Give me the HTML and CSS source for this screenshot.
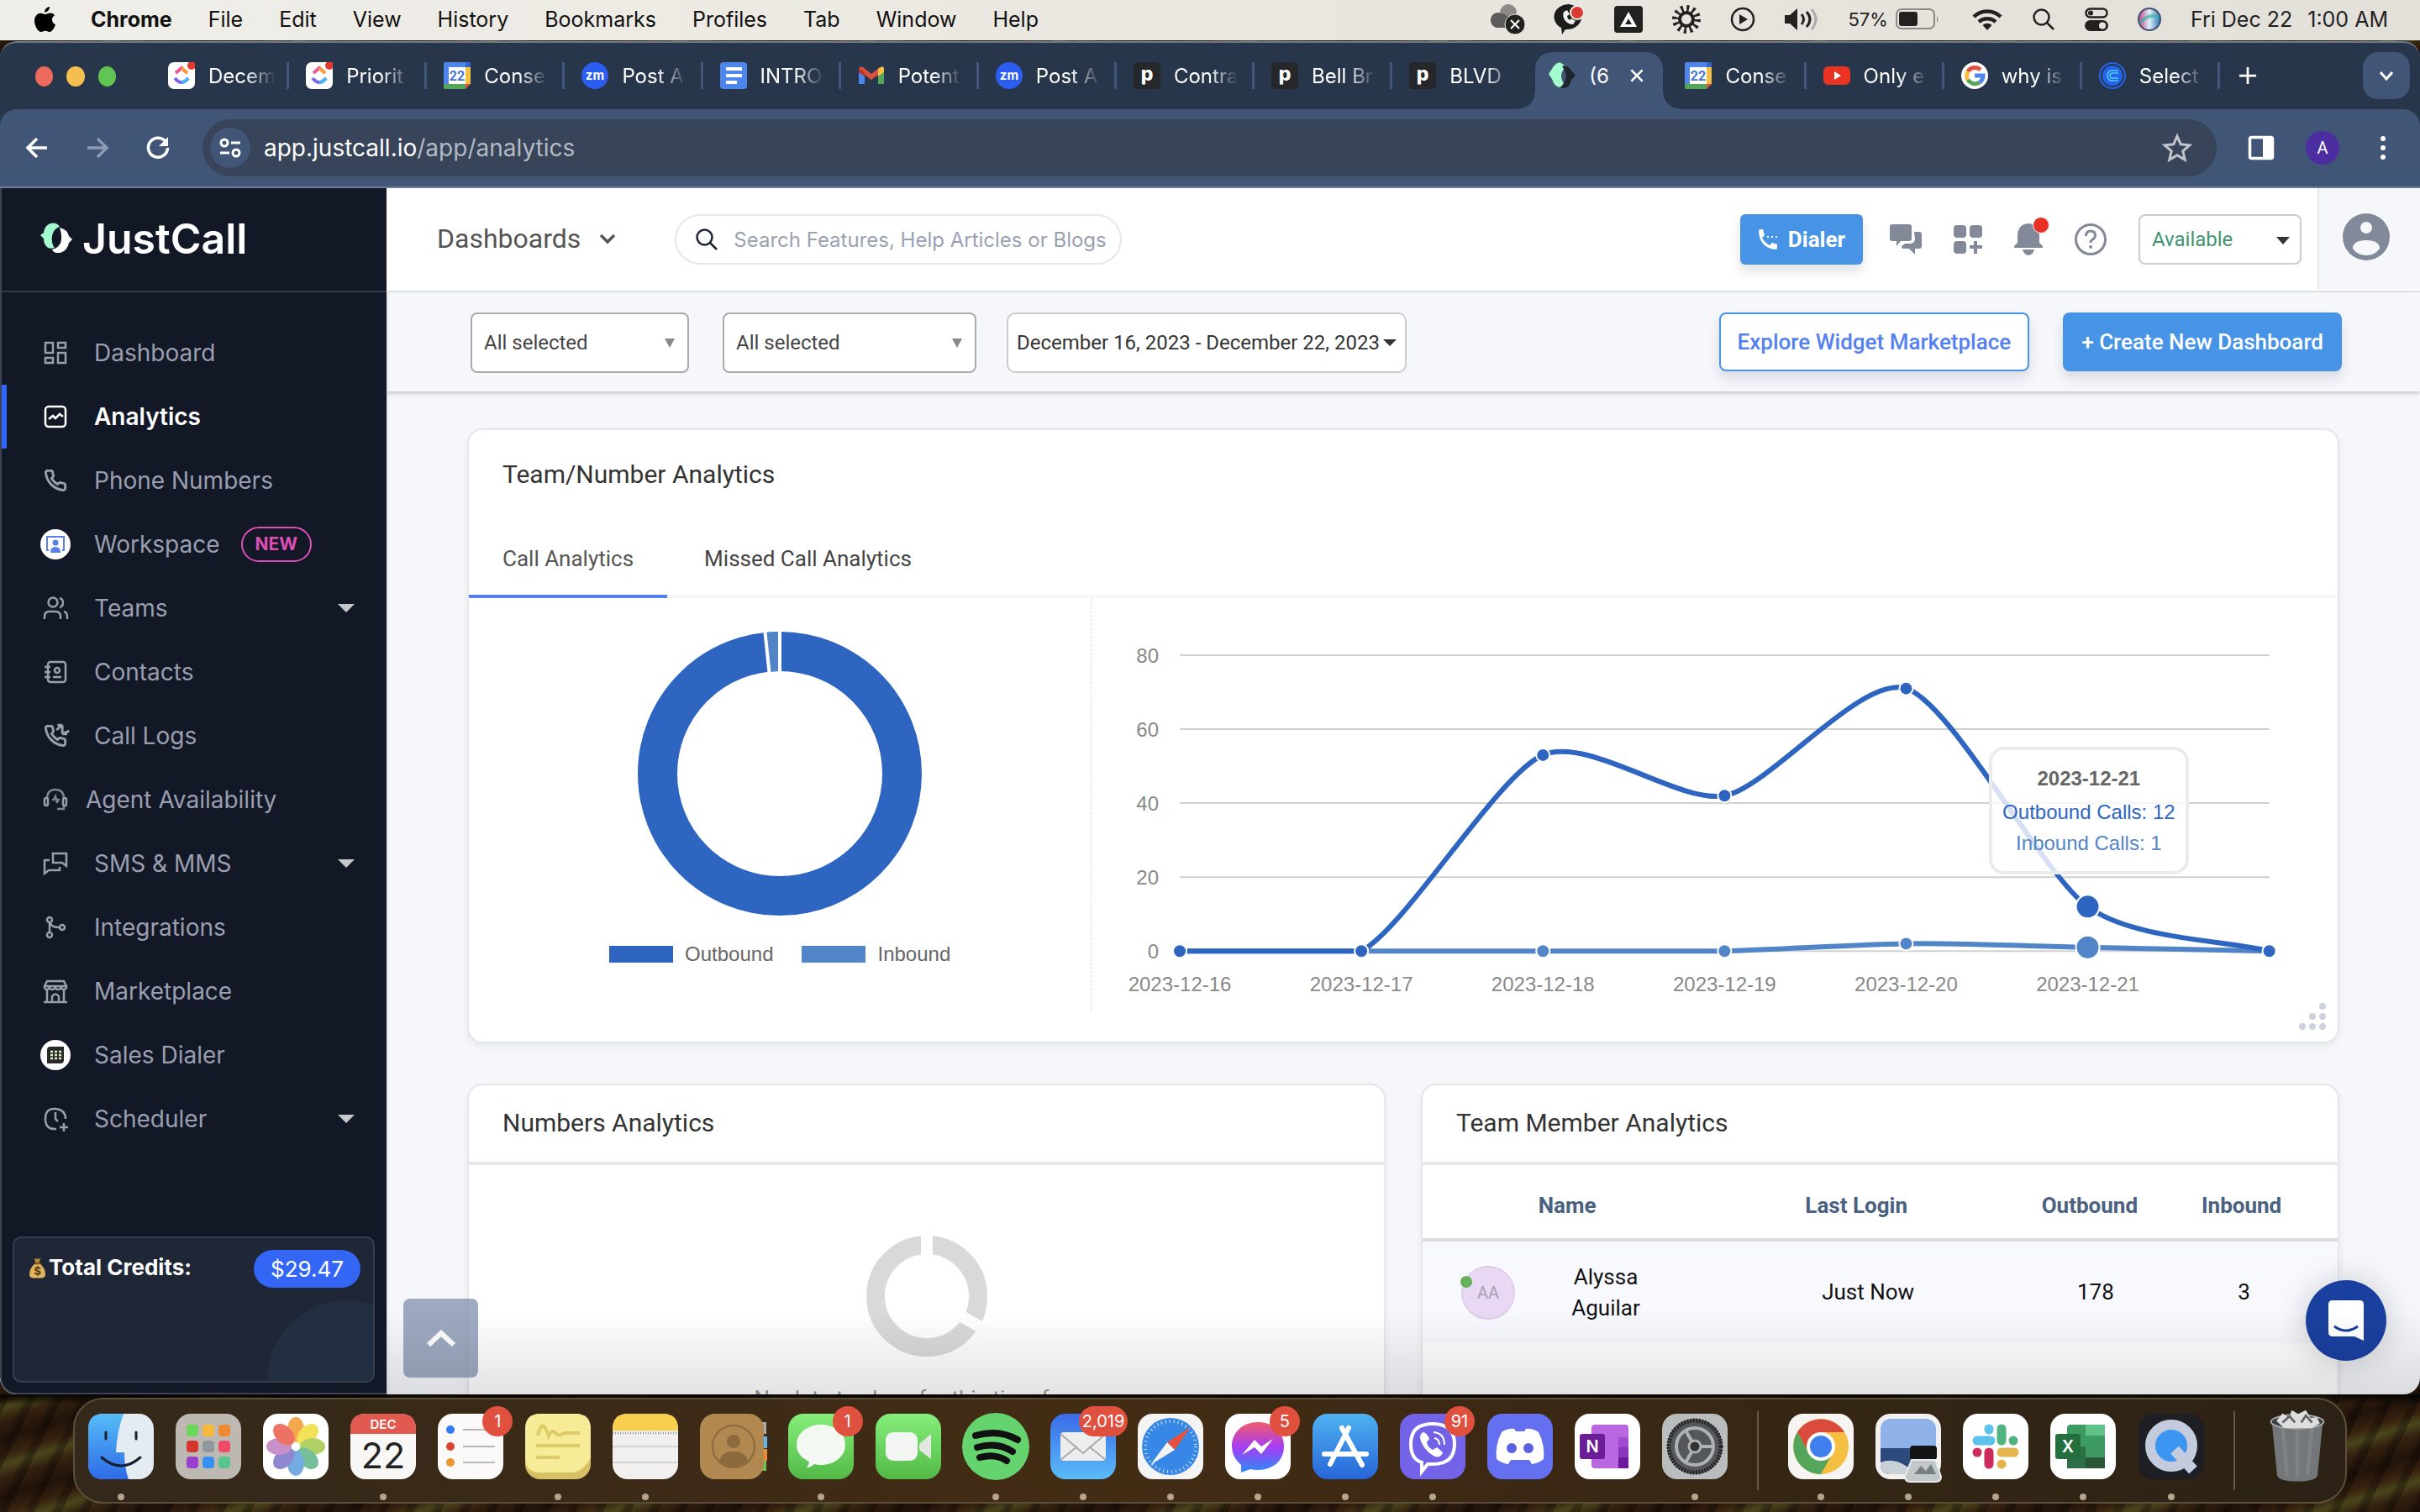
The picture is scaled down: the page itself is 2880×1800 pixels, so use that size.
FILE: index.html
```html
<!DOCTYPE html>
<html lang="en">
<head>
<meta charset="UTF-8">
<meta name="viewport" content="width=device-width, initial-scale=1.0">
<title>JustCall - Analytics</title>
<link rel="stylesheet" href="styles.css">
</head>
<body>
<!-- shared icons -->
<svg class="defs" aria-hidden="true">
<symbol id="i-clickup" viewBox="0 0 32 32"><rect width="32" height="32" rx="7" fill="#fff"/><path d="M9 13l7-6 7 6" fill="none" stroke="#f0569a" stroke-width="4"/><path d="M16 7l7 6" fill="none" stroke="#f9a03c" stroke-width="4"/><path d="M8 19q8 10 16 0" fill="none" stroke="#7b68ee" stroke-width="4"/><path d="M16 24q4 0 8-5" fill="none" stroke="#49b7f5" stroke-width="4"/><circle cx="28" cy="4" r="5" fill="#e23b2e"/></symbol>
<symbol id="i-gcal" viewBox="0 0 32 32"><path d="M0 2q0-2 2-2h24v26H0z" fill="#4f86ec"/><path d="M26 0h4q2 0 2 2v4h-6z" fill="#3467d6"/><path d="M26 6h6v20h-6z" fill="#f5c042"/><path d="M0 26h26v6H2q-2 0-2-2z" fill="#55a55a"/><path d="M26 26h6l-6 6z" fill="#e0503f"/><path d="M6 6h20v20H6z" fill="#fff"/><text x="16" y="22" text-anchor="middle" font-family="Roboto" font-size="16" font-weight="700" fill="#4575d0">22</text></symbol>
<symbol id="i-zoom" viewBox="0 0 32 32"><circle cx="16" cy="16" r="16" fill="#2b5df0"/><text x="16" y="21" text-anchor="middle" font-family="Inter" font-size="15" font-weight="700" fill="#fff">zm</text></symbol>
<symbol id="i-pd" viewBox="0 0 32 32"><rect width="32" height="32" rx="5" fill="#25272b"/><text x="16" y="22" text-anchor="middle" font-family="Inter" font-size="23" font-weight="800" fill="#fff">p</text></symbol>
<symbol id="i-phone" viewBox="0 0 24 24"><path d="M22 16.9v3a2 2 0 0 1-2.2 2A19.8 19.8 0 0 1 2.1 4.2 2 2 0 0 1 4.1 2h3a2 2 0 0 1 2 1.7c.1 1 .4 1.9.7 2.8a2 2 0 0 1-.5 2.1L8.1 9.900a16 16 0 0 0 6 6l1.300-1.200a2 2 0 0 1 2.100-.5c.9.3 1.800.6 2.800.7a2 2 0 0 1 1.700 2z"/></symbol>
<symbol id="i-x" viewBox="0 0 20 20"><path d="M4 4l12 12M16 4L4 16" stroke="currentColor" stroke-width="2.500" fill="none"/></symbol>
<symbol id="i-search" viewBox="0 0 28 28"><circle cx="11.500" cy="11.500" r="9" fill="none" stroke="currentColor" stroke-width="2.500"/><path d="M18 18l8 8" stroke="currentColor" stroke-width="2.500"/></symbol>
</svg>

<header class="menubar">
<nav class="menus">
<svg class="apple" viewBox="0 0 26 30"><path d="M18 0c.3 3-2.500 6.500-5.800 6.600C11.800 3.500 14.800.3 18 0zM24 10.300c-4.500 2.700-3.800 9 1 11C23.500 25.500 21 30 17.800 30c-2 0-2.600-1.200-4.900-1.200S9.800 30 8 30C4 30 0 22.500 0 17 0 11 3.700 7.700 7.500 7.700c2.200 0 3.900 1.400 5.400 1.400 1.400 0 3.400-1.500 6.100-1.500 2 0 3.900 1 5 2.700z"/></svg>
<a href="#" class="app">Chrome</a><a href="#">File</a><a href="#">Edit</a><a href="#">View</a><a href="#">History</a><a href="#">Bookmarks</a><a href="#">Profiles</a><a href="#">Tab</a><a href="#">Window</a><a href="#">Help</a>
</nav>
<div class="status">
<svg width="40" height="36" viewBox="0 0 40 36"><circle cx="20" cy="10" r="10" fill="#8b8a86"/><path d="M8 28a9 9 0 1 1 4-17c6 0 10 6 10 17z" fill="#5d5c5a"/><circle cx="28" cy="24" r="12" fill="#22211f" stroke="#e8e5df"/><path d="M23 19l10 10M33 19L23 29" stroke="#fff" stroke-width="2"/></svg>
<svg width="36" height="36" viewBox="0 0 36 36"><path d="M17 0a17 15 0 1 1-4 30l-4 6-1-8A17 15 0 0 1 17 0z" fill="#1b1b1a"/><path d="M11 9c-3 7 3 15 11 15l3-4-5-3-2 2q-3-2-3-5l3-2-3-5z" fill="#eee"/><circle cx="27" cy="10" r="8" fill="#d93a31" stroke="#eee" stroke-width="2"/></svg>
<svg width="34" height="34" viewBox="0 0 34 34"><rect y="1" width="34" height="32" rx="4" fill="#22211f"/><path d="M17 8l10 18H7z" fill="#fff"/><path d="M17 16l4 7h-8z" fill="#22211f"/></svg>
<svg width="34" height="34" viewBox="0 0 34 34"><circle cx="17" cy="17" r="8" fill="none" stroke="#22211f" stroke-width="4"/><circle cx="17" cy="17" r="13" fill="none" stroke="#22211f" stroke-width="8" stroke-dasharray="2.800 4"/></svg>
<svg width="30" height="30" viewBox="0 0 30 30"><circle cx="15" cy="15" r="13" fill="none" stroke="#22211f" stroke-width="2.500"/><path d="M11 9l10 6-10 6z" fill="#22211f"/></svg>
<svg width="40" height="28" viewBox="0 0 40 28"><path d="M0 9h6l9-8v26l-9-8H0z" fill="#22211f"/><path d="M20 8q5 6 0 12M26 5q8 9 0 18" fill="none" stroke="#22211f" stroke-width="3"/><path d="M32 2q10 12 0 24" fill="none" stroke="#aaa" stroke-width="3"/></svg>
<span class="batt">57% <svg width="52" height="26" viewBox="0 0 52 26"><rect x="1" y="1" width="45" height="23" rx="6" fill="none" stroke="#8b8a86" stroke-width="2"/><rect x="4" y="4" width="22" height="17" rx="3" fill="#22211f"/><path d="M49 9q3 4 0 8z" fill="#8b8a86"/></svg></span>
<svg width="36" height="26" viewBox="0 0 36 26"><path d="M2 10a23 23 0 0 1 32 0M8 16a15 15 0 0 1 20 0" fill="none" stroke="#22211f" stroke-width="4.500"/><path d="M12.500 20a8 8 0 0 1 11 0L18 26z" fill="#22211f"/></svg>
<svg width="28" height="28"><use href="#i-search"/></svg>
<svg width="28" height="28" viewBox="0 0 28 28"><rect x="1.500" y="1.500" width="25" height="10" rx="5" fill="none" stroke="#22211f" stroke-width="2.500"/><circle cx="7" cy="6.500" r="3" fill="#22211f"/><rect y="15" width="28" height="13" rx="6.500" fill="#22211f"/><circle cx="21" cy="21.500" r="4" fill="#e8e5df"/></svg>
<svg width="28" height="28" viewBox="0 0 28 28"><defs><linearGradient id="siri"><stop offset="0" stop-color="#c84a8c"/><stop offset=".5" stop-color="#dff1f5"/><stop offset="1" stop-color="#3a7bc0"/></linearGradient></defs><circle cx="14" cy="14" r="14" fill="#414f71"/><circle cx="14" cy="14" r="12" fill="url(#siri)"/><path d="M3 18q11-12 22-6" stroke="#35b6a8" stroke-width="4" fill="none" opacity=".7"/></svg>
<span class="clock"><span>Fri Dec 22</span><span>1:00 AM</span></span>
</div>
</header>

<div class="window">
<div class="tabstrip">
<div class="lights"><i class="red"></i><i class="yellow"></i><i class="green"></i></div>
<div class="tabs">
<div class="tab"><svg><use href="#i-clickup"/></svg><span>Decem</span></div>
<div class="tab"><svg><use href="#i-clickup"/></svg><span>Priorit</span></div>
<div class="tab"><svg><use href="#i-gcal"/></svg><span>Conse</span></div>
<div class="tab"><svg><use href="#i-zoom"/></svg><span>Post A</span></div>
<div class="tab"><svg viewBox="0 0 32 32"><rect width="32" height="32" rx="4" fill="#4f86ec"/><path d="M7 8h19M7 16h19M7 24h13" stroke="#fff" stroke-width="4"/></svg><span>INTRO</span></div>
<div class="tab"><svg viewBox="0 0 32 32"><path d="M1 7v19h7V12z" fill="#4f86ec"/><path d="M31 7v19h-7V12z" fill="#55a55a"/><path d="M1 9q0-5 5-3l10 8 10-8-2 9-8 6-8-6z" fill="#d9503f"/><path d="M24 8q7-6 7 1v3l-7 5z" fill="#f5c042"/><path d="M1 7l7 5v5l-7-5z" fill="#b8362c"/></svg><span>Potent</span></div>
<div class="tab"><svg><use href="#i-zoom"/></svg><span>Post A</span></div>
<div class="tab"><svg><use href="#i-pd"/></svg><span>Contra</span></div>
<div class="tab"><svg><use href="#i-pd"/></svg><span>Bell Br</span></div>
<div class="tab last"><svg><use href="#i-pd"/></svg><span>BLVD</span></div>
<div class="tab active"><svg viewBox="0 0 32 32"><path d="M4 8q8-14 16-2-10 10 0 22Q8 34 4 20l-4-6z" fill="#a4fbd0"/><path d="M16 5q6-2 11 5l5 6-5 5q-3 13-13 9Q26 18 16 5z" fill="#20242c"/></svg><span>(6</span><button class="close" aria-label="Close tab"><svg><use href="#i-x"/></svg></button></div>
<div class="tab"><svg><use href="#i-gcal"/></svg><span>Conse</span></div>
<div class="tab"><svg viewBox="0 0 32 32"><rect y="5" width="32" height="22" rx="6" fill="#ea3323"/><path d="M13 11l8 5-8 5z" fill="#fff"/></svg><span>Only e</span></div>
<div class="tab"><svg viewBox="0 0 32 32"><circle cx="16" cy="16" r="16" fill="#fff"/><g fill="none" stroke-width="5"><path d="M23 9a10 10 0 0 0-15 2" stroke="#e0503f"/><path d="M8 11a10 10 0 0 0 0 10" stroke="#f5c042"/><path d="M8 21a10 10 0 0 0 14 3" stroke="#55a55a"/><path d="M22 24a10 10 0 0 0 4-8H16" stroke="#4f86ec"/></g></svg><span>why is</span></div>
<div class="tab"><svg viewBox="0 0 32 32"><circle cx="16" cy="16" r="15" fill="none" stroke="#2563eb" stroke-width="2"/><circle cx="16" cy="16" r="12" fill="#2563eb"/><path d="M23 10H15a5 6 0 0 0 0 12h8M23 13h-7a3 3 0 0 0 0 6h7" fill="none" stroke="#4fd0f5" stroke-width="1.500"/></svg><span>Select</span></div>
</div>
<button class="newtab" aria-label="New tab"><svg viewBox="0 0 24 24"><path d="M12 1v22M1 12h22" stroke="#fff" stroke-width="3"/></svg></button>
<button class="tabmenu" aria-label="Search tabs"><svg viewBox="0 0 20 20"><path d="M3 6l7 8 7-8" fill="none" stroke="#fff" stroke-width="3"/></svg></button>
</div>

<div class="toolbar">
<button aria-label="Back"><svg viewBox="0 0 28 28"><path d="M26 14H4M14 3L3 14l11 11" fill="none" stroke="#fff" stroke-width="3.500"/></svg></button>
<button aria-label="Forward"><svg viewBox="0 0 28 28"><path d="M2 14h22M14 3l11 11-11 11" fill="none" stroke="#8d9ab2" stroke-width="3.500"/></svg></button>
<button aria-label="Reload"><svg viewBox="0 0 28 28"><path d="M24 8a11.500 11.500 0 1 0 1.500 6" fill="none" stroke="#fff" stroke-width="3.500"/><path d="M26 1v11H15z" fill="#fff"/></svg></button>
<div class="omnibox">
<span class="site"><svg viewBox="0 0 28 28" fill="none" stroke="#fff" stroke-width="3"><circle cx="7" cy="8" r="4"/><path d="M15 8h11M2 20h11"/><circle cx="21" cy="20" r="4"/></svg></span>
<p>app.justcall.io<em>/app/analytics</em></p>
<svg class="star" viewBox="0 0 34 34"><path d="M17 3l4.200 9.800 10.600 1-8 7 2.400 10.400L17 25.700l-9.200 5.500 2.400-10.400-8-7 10.600-1z" fill="none" stroke="#c2c6cc" stroke-width="3"/></svg>
</div>
<svg class="panel" viewBox="0 0 30 30"><rect x="1.500" y="2.500" width="27" height="25" rx="2" fill="none" stroke="#fff" stroke-width="3.500"/><path d="M17 2h11v26H17z" fill="#fff"/></svg>
<span class="profile">A</span>
<svg class="kebab" viewBox="0 0 8 30" fill="#fff"><circle cx="4" cy="4" r="3"/><circle cx="4" cy="15" r="3"/><circle cx="4" cy="26" r="3"/></svg>
</div>

<div class="page">
<aside class="sidebar">
<div class="logo"><svg viewBox="0 0 38 38"><path d="M4 12C6-2 20-2 23 5 12 8 12 24 17 30 8 33 4 26 4 19l-4-4z" fill="#a4fbd0"/><path d="M23 6q9 2 11 10l4 4-4 4q-3 13-15 12-4-1-5-4 16-4 9-26z" fill="#fff"/></svg><span>JustCall</span></div>
<nav class="menu">
<a href="#"><svg viewBox="0 0 28 28"><path d="M2 2h9v12H2zM17 2h9v6h-9zM2 20h9v6H2zM17 14h9v12h-9z"/></svg><span>Dashboard</span></a>
<a href="#" class="on"><svg viewBox="0 0 28 28"><rect x="2" y="2" width="24" height="24" rx="4"/><path d="M6 17l5-4 3 3 5-5 4 3"/></svg><span>Analytics</span></a>
<a href="#"><svg viewBox="0 0 24 24" stroke-width="2"><use href="#i-phone"/></svg><span>Phone Numbers</span></a>
<a href="#"><svg class="disc" viewBox="0 0 36 36"><circle cx="18" cy="18" r="18" fill="#fff" stroke="none"/><path d="M10 25H8V9h20v16h-2" stroke="#5b7fe8" stroke-width="2"/><circle cx="18" cy="16" r="3.500" fill="#5b7fe8" stroke="none"/><path d="M12 28q0-7 6-7t6 7z" fill="#5b7fe8" stroke="none"/></svg><span>Workspace</span><b class="new">NEW</b></a>
<a href="#"><svg viewBox="0 0 28 28"><circle cx="11" cy="7" r="5.500"/><path d="M1 27v-3q0-6 6-6h7q6 0 6 6v3M19 2q4 1 4 5.500T19 13M24 18q4 1 4 6v3"/></svg><span>Teams</span><i class="caret"></i></a>
<a href="#"><svg viewBox="0 0 28 28"><rect x="5" y="2" width="21" height="24" rx="3"/><path d="M1 8h7M1 14h7M1 20h7M11 20h10"/><circle cx="16" cy="12" r="3"/></svg><span>Contacts</span></a>
<a href="#"><svg viewBox="0 0 24 24"><use href="#i-phone"/><path d="M13 6l6-5m0 0h-5m5 0v4M26 7l-7 3m0 0V5m0 5h5"/></svg><span>Call Logs</span></a>
<a href="#" class="tight"><svg viewBox="0 0 28 28"><path d="M4 13Q4 2 14 2t10 11M10 14h2l2-4 2 8 1-4h2M24 20v5h-8" opacity=".8"/><rect x="1" y="12" width="4" height="9" rx="2"/><rect x="23" y="12" width="4" height="9" rx="2"/></svg><span>Agent Availability</span></a>
<a href="#"><svg viewBox="0 0 28 28"><path d="M11 2h16v15l-5-4H11zM7 10H1v16l5-4h13v-4"/></svg><span>SMS &amp; MMS</span><i class="caret"></i></a>
<a href="#"><svg viewBox="0 0 28 28"><circle cx="7" cy="5" r="3"/><circle cx="7" cy="23" r="3"/><circle cx="22" cy="14" r="3"/><path d="M7 8v12M8 9q1 5 11 5"/></svg><span>Integrations</span></a>
<a href="#"><svg viewBox="0 0 28 28"><path d="M4 2h20l3 6v2q-3 4-6 0-4 4-7 0-4 4-7 0-4 4-6 0V8zM4 13v13M24 13v13M0 27h28M2 8h24M10 26v-6q4-5 8 0v6"/></svg><span>Marketplace</span></a>
<a href="#"><svg class="disc" viewBox="0 0 36 36"><circle cx="18" cy="18" r="18" fill="#fff" stroke="none"/><path d="M8 12q0-4 4-4h16v16q0 4-4 4H8z" fill="#2a2a2a" stroke="none"/><path d="M12 14h13M12 18h13M12 22h13" stroke="#d9f5c4" stroke-width="2.500" stroke-dasharray="3 2"/></svg><span>Sales Dialer</span></a>
<a href="#"><svg viewBox="0 0 28 28"><path d="M15 26Q2 27 2 14T14 2t12 12M14 6v8l3 3M24 19v10M19 24h10"/></svg><span>Scheduler</span><i class="caret"></i></a>
</nav>
<div class="credits">
<svg viewBox="0 0 20 24"><path d="M6 0h8l-2 5H8z" fill="#b98a3a"/><path d="M7 6h6q7 6 7 13 0 5-5 5H5q-5 0-5-5Q0 12 7 6z" fill="#e0b45c"/><path d="M6 6h8" stroke="#8a5a20" stroke-width="2"/><text x="10" y="20" text-anchor="middle" font-size="14" font-weight="700" font-family="Inter" fill="#5a3c12">$</text></svg>
<strong>Total Credits:</strong><span>$29.47</span>
</div>
</aside>

<main>
<header class="topbar">
<button class="dash">Dashboards <svg viewBox="0 0 20 20"><path d="M2 6l8 8 8-8" fill="none" stroke="#555" stroke-width="3.500"/></svg></button>
<label class="search"><svg viewBox="0 0 28 28"><use href="#i-search"/></svg><input type="text" placeholder="Search Features, Help Articles or Blogs" aria-label="Search"></label>
<div class="actions">
<button class="dialer"><svg viewBox="0 0 24 24"><path d="M1 2q0-2 2-2h3l2 7-3 3q3 6 9 9l3-3 6 2v4q0 2-2 2Q2 22 1 2z" fill="#fff"/><path d="M11 9h2m3 0h2m3 0h2" stroke="#fff" stroke-width="2"/></svg>Dialer</button>
<svg width="38" height="36" viewBox="0 0 38 36"><path d="M3 0h20q3 0 3 3v14q0 3-3 3H13l-5 6v-6H3q-3 0-3-3V3q0-3 3-3z"/><path d="M29 9h6q3 0 3 3v14q0 3-3 3h-5v7l-7-7h-8l-1-3 4-3h7q5-1 5-6z"/></svg>
<svg width="34" height="34" viewBox="0 0 34 34"><rect width="15" height="15" rx="4"/><rect x="19" width="15" height="15" rx="4"/><rect y="19" width="15" height="15" rx="4"/><path d="M24 19h4v5h6v4h-6v6h-4v-6h-5v-4h5z"/></svg>
<span class="bell"><svg width="34" height="38" viewBox="0 0 34 38"><path d="M17 0q13 1 13 15v8l4 4v2H0v-2l4-4v-8Q4 1 17 0zM10 31h14q-2 7-7 7t-7-7z"/></svg></span>
<svg width="38" height="38" viewBox="0 0 38 38"><circle cx="19" cy="19" r="17.500" fill="none" stroke="#828a99" stroke-width="3"/><path d="M13.500 15q0-6 5.500-6t5.500 5q0 3-3 5t-2.500 4" fill="none" stroke="#828a99" stroke-width="3"/><circle cx="19" cy="28" r="2"/></svg>
<span class="pick status-pick"><select aria-label="Status"><option>Available</option></select></span>
</div>
<div class="me"><svg viewBox="0 0 56 56"><circle cx="28" cy="28" r="28"/><circle cx="28" cy="17" r="7" fill="#f5f7fb"/><path d="M12 42q0-10 16-10t16 10q-6 8-16 8t-16-8z" fill="#f5f7fb"/></svg></div>
</header>

<section class="filters">
<span class="pick w-s"><select aria-label="Teams"><option>All selected</option></select></span>
<span class="pick w-m"><select aria-label="Numbers"><option>All selected</option></select></span>
<button class="date">December 16, 2023 - December 22, 2023<i></i></button>
<button class="btn outline">Explore Widget Marketplace</button>
<button class="btn">+ Create New Dashboard</button>
</section>

<div class="cards">
<section class="card wide">
<h2>Team/Number Analytics</h2>
<div class="cardtabs"><button class="on">Call Analytics</button><button>Missed Call Analytics</button></div>
<div class="charts">
<div class="pie">
<svg viewBox="0 0 340 340" id="donut"></svg>
<ul><li class="out">Outbound</li><li class="in">Inbound</li></ul>
</div>
<div class="line">
<svg viewBox="0 0 1482 492" id="line"></svg>
<div class="tip"><b>2023-12-21</b><span class="o">Outbound Calls: 12</span><span class="i">Inbound Calls: 1</span></div>
</div>
</div>
<svg class="grip" viewBox="0 0 32 32"><g fill="#cdd2de"><circle cx="28" cy="4" r="4"/><circle cx="16" cy="16" r="4"/><circle cx="28" cy="16" r="4"/><circle cx="4" cy="28" r="4"/><circle cx="16" cy="28" r="4"/><circle cx="28" cy="28" r="4"/></g></svg>
</section>

<section class="card">
<h2 class="ruled">Numbers Analytics</h2>
<div class="empty">
<svg viewBox="0 0 144 144"><circle cx="72" cy="72" r="61" fill="none" stroke="#d9d9d9" stroke-width="22"/><path d="M72 72V-6M72 72l76 44" stroke="#fff" stroke-width="14"/></svg>
<p>No data to show for this time frame</p>
</div>
</section>

<section class="card">
<h2 class="ruled">Team Member Analytics</h2>
<table>
<thead><tr><th class="c1">Name</th><th class="c2">Last Login</th><th class="c3">Outbound</th><th class="c4">Inbound</th><th></th></tr></thead>
<tbody><tr><td><div class="member"><span class="avatar">AA</span><span>Alyssa<br>Aguilar</span></div></td><td>Just Now</td><td class="num">178</td><td class="num in">3</td><td></td></tr></tbody>
</table>
</section>
</div>
<button class="totop" aria-label="Back to top"><svg viewBox="0 0 36 24"><path d="M3 20L18 6l15 14" fill="none" stroke="#fff" stroke-width="6"/></svg></button>
<button class="chat" aria-label="Open chat"><svg viewBox="0 0 42 48"><path d="M5 0h32q5 0 5 5v43l-11-5H5q-5 0-5-5V5q0-5 5-5z" fill="#fff"/><path d="M7 31q14 10 28 0" fill="none" stroke="#1a409f" stroke-width="3"/></svg></button>
</main>
</div>
</div>

<footer class="dockarea">
<div class="dock">
<div class="ico run"><svg viewBox="0 0 78 78"><defs><linearGradient id="fin" x2="0" y2="1"><stop offset="0" stop-color="#55bdf7"/><stop offset="1" stop-color="#2f6ae8"/></linearGradient></defs><rect width="78" height="78" rx="18" fill="#e4ebf3"/><path d="M18 0h24q-8 22-9 46h10q0 18 5 32H18Q0 78 0 60V18Q0 0 18 0z" fill="url(#fin)"/><path d="M21 22v8M57 22v8M16 52q23 20 46 0" fill="none" stroke="#16202e" stroke-width="3" stroke-linecap="round"/></svg></div>
<div class="ico"><svg viewBox="0 0 78 78"><rect width="78" height="78" rx="18" fill="#bdb9b2"/><g><rect x="13" y="13" width="14" height="14" rx="4" fill="#6ad85a"/><rect x="32" y="13" width="14" height="14" rx="4" fill="#f6b93c"/><rect x="51" y="13" width="14" height="14" rx="4" fill="#ee8b32"/><rect x="13" y="32" width="14" height="14" rx="4" fill="#d4362c"/><rect x="32" y="32" width="14" height="14" rx="4" fill="#8f989c"/><rect x="51" y="32" width="14" height="14" rx="4" fill="#ef4b66"/><rect x="13" y="51" width="14" height="14" rx="4" fill="#9a3fd0"/><rect x="32" y="51" width="14" height="14" rx="4" fill="#3590f2"/><rect x="51" y="51" width="14" height="14" rx="4" fill="#5ac48e"/></g></svg></div>
<div class="ico"><svg viewBox="0 0 78 78"><rect width="78" height="78" rx="18" fill="#fff"/><g transform="translate(39 39)" opacity=".85"><ellipse cy="-20" rx="10" ry="15" fill="#f39a2e"/><ellipse cy="-20" rx="10" ry="15" fill="#f2dc3a" transform="rotate(45)"/><ellipse cy="-20" rx="10" ry="15" fill="#a5c94a" transform="rotate(90)"/><ellipse cy="-20" rx="10" ry="15" fill="#5fb58a" transform="rotate(135)"/><ellipse cy="-20" rx="10" ry="15" fill="#5c9ddb" transform="rotate(180)"/><ellipse cy="-20" rx="10" ry="15" fill="#7a74c8" transform="rotate(225)"/><ellipse cy="-20" rx="10" ry="15" fill="#c07cc0" transform="rotate(270)"/><ellipse cy="-20" rx="10" ry="15" fill="#ea5a4a" transform="rotate(315)"/></g></svg></div>
<div class="ico run"><svg viewBox="0 0 78 78"><rect width="78" height="78" rx="18" fill="#f8f7f5"/><path d="M0 24v-6Q0 0 18 0h42q18 0 18 18v6z" fill="#e15a4f"/><text x="39" y="18" text-anchor="middle" font-size="15" font-weight="600" fill="#fff">DEC</text><text x="39" y="65" text-anchor="middle" font-size="43" fill="#222">22</text></svg></div>
<div class="ico"><svg viewBox="0 0 78 78"><rect width="78" height="78" rx="18" fill="#fbfaf8"/><path d="M30 19h38M30 39h38M30 58h38" stroke="#b9b9bb" stroke-width="2"/><g stroke-width="2"><circle cx="15" cy="19" r="5" fill="#2f7cf0"/><circle cx="15" cy="39" r="5" fill="#d94436"/><circle cx="15" cy="58" r="5" fill="#ec9a30"/></g></svg><b>1</b></div>
<div class="ico run"><svg viewBox="0 0 78 78"><rect width="78" height="78" rx="18" fill="#d7c064"/><path d="M18 0h42q18 0 18 18v34q-6 14-20 18H18Q0 70 0 52V18Q0 0 18 0z" fill="#f6ec98"/><path d="M15 26q4-16 8-10t5 10q4-8 8-3t10 0h19M13 38h52M13 52h28" fill="none" stroke="#dccb68" stroke-width="4"/></svg></div>
<div class="ico run"><svg viewBox="0 0 78 78"><rect width="78" height="78" rx="18" fill="#f1f0ee"/><path d="M0 20v-2Q0 0 18 0h42q18 0 18 18v2z" fill="#f8cf4c"/><path d="M0 23h78" stroke="#999" stroke-width="3" stroke-dasharray="1 2"/><path d="M0 39h78M0 58h78" stroke="#d6d5d3" stroke-width="2"/></svg></div>
<div class="ico"><svg viewBox="0 0 78 78"><path d="M70 10h9v14h-9z" fill="#aaa"/><path d="M70 27h10v14H70z" fill="#59b4ee"/><path d="M70 42h10v14H70z" fill="#ef8a31"/><path d="M70 56h9v12h-9z" fill="#6cc552"/><rect width="76" height="78" rx="18" fill="#b08850"/><circle cx="40" cy="39" r="25" fill="none" stroke="#8d6a3c" stroke-width="2"/><circle cx="40" cy="33" r="8" fill="#8d6a3c"/><path d="M23 57q2-12 17-12t17 12q-8 7-17 7t-17-7z" fill="#8d6a3c"/></svg></div>
<div class="ico run"><svg viewBox="0 0 78 78"><defs><linearGradient id="grn" x2="0" y2="1"><stop offset="0" stop-color="#86ef7c"/><stop offset="1" stop-color="#52b946"/></linearGradient></defs><rect width="78" height="78" rx="18" fill="url(#grn)"/><path d="M39 13c16 0 29 10 29 24S55 61 39 61q-4 0-8-1-4 4-9 4 3-4 3-7-15-7-15-20c0-14 13-24 29-24z" fill="#f4f8f3"/></svg><b>1</b></div>
<div class="ico"><svg viewBox="0 0 78 78"><rect width="78" height="78" rx="18" fill="url(#grn)"/><rect x="12" y="22" width="38" height="34" rx="9" fill="#f3f5f2"/><path d="M52 36l14-12v30L52 43z" fill="#e2e8e0"/></svg></div>
<div class="ico run"><svg viewBox="0 0 78 78"><circle cx="39" cy="39" r="40" fill="#65d36e"/><path d="M15 26q28-8 50 5M17 40q24-7 42 5M20 52q19-5 32 4" fill="none" stroke="#111" stroke-width="8" stroke-linecap="round"/></svg></div>
<div class="ico run"><svg viewBox="0 0 78 78"><defs><linearGradient id="mail" x2="0" y2="1"><stop offset="0" stop-color="#3a6be8"/><stop offset="1" stop-color="#5abcf8"/></linearGradient></defs><rect width="78" height="78" rx="18" fill="url(#mail)"/><rect x="12" y="22" width="54" height="34" rx="4" fill="#eee"/><path d="M12 24l27 23 27-23M12 55l20-16M66 55L46 39" fill="none" stroke="#aaa" stroke-width="2"/></svg><b class="long">2,019</b></div>
<div class="ico run"><svg viewBox="0 0 78 78"><rect width="78" height="78" rx="18" fill="#f4f4f4"/><circle cx="39" cy="39" r="34" fill="#3787e6"/><circle cx="39" cy="39" r="30" fill="none" stroke="#cfe3fa" stroke-width="4" stroke-dasharray="1 4"/><path d="M63 16L44 43l-9-9z" fill="#e4523f"/><path d="M35 34l9 9L15 61z" fill="#f3f3f3"/></svg></div>
<div class="ico run"><svg viewBox="0 0 78 78"><defs><linearGradient id="msg" x2="0" y2="1"><stop offset="0" stop-color="#f25a6b"/><stop offset=".5" stop-color="#a53df6"/><stop offset="1" stop-color="#2a8cf5"/></linearGradient></defs><rect width="78" height="78" rx="18" fill="#fff"/><path d="M39 10c18 0 31 12 31 29S57 67 39 67q-5 0-9-1l-11 4v-9Q8 52 8 39c0-17 13-29 31-29z" fill="url(#msg)"/><path d="M20 49l15-18 8 8 14-9-14 18-8-8z" fill="#fff"/></svg><b>5</b></div>
<div class="ico run"><svg viewBox="0 0 78 78"><defs><linearGradient id="store" x2="0" y2="1"><stop offset="0" stop-color="#4fb2f2"/><stop offset="1" stop-color="#2765d8"/></linearGradient></defs><rect width="78" height="78" rx="18" fill="url(#store)"/><path d="M43 17L21 60M35 17l24 44M14 48h50" fill="none" stroke="#fff" stroke-width="6" stroke-linecap="round"/></svg></div>
<div class="ico run"><svg viewBox="0 0 78 78"><rect width="78" height="78" rx="18" fill="#7263e8"/><path d="M39 12q26 0 26 24T39 60h-6l-7 9v-11q-13-4-13-22 0-24 26-24z" fill="none" stroke="#fff" stroke-width="4"/><path d="M27 22q-6 5 0 15t15 14q7 2 9-5l-7-6-5 3q-6-3-7-9l3-4q-3-8-8-8z" fill="#fff"/><path d="M40 22q13 1 13 15M41 29q6 1 6 8" fill="none" stroke="#fff" stroke-width="2"/></svg><b>91</b></div>
<div class="ico"><svg viewBox="0 0 78 78"><rect width="78" height="78" rx="18" fill="#6470ef"/><path d="M17 22q8-5 15-4l2 3h10l2-3q7-1 15 4 8 16 6 32-6 5-14 6l-3-5H28l-3 5q-8-1-14-6-2-16 6-32z" fill="#fff"/><circle cx="29" cy="41" r="6" fill="#5a62e2"/><circle cx="49" cy="41" r="6" fill="#5a62e2"/></svg></div>
<div class="ico"><svg viewBox="0 0 78 78"><rect width="78" height="78" rx="18" fill="#fff"/><rect x="20" y="13" width="44" height="52" rx="4" fill="#b867e0"/><path d="M52 28h12v12H52z" fill="#a24bd0"/><path d="M52 40h12v12H52z" fill="#8c35bd"/><path d="M52 52h12v13H52z" fill="#6c1a9c"/><rect x="6" y="24" width="30" height="30" rx="3" fill="#6a1d96"/><text x="21" y="46" text-anchor="middle" font-size="20" font-weight="600" fill="#fff">N</text></svg></div>
<div class="ico run"><svg viewBox="0 0 78 78"><rect width="78" height="78" rx="18" fill="#b9bdbe"/><circle cx="39" cy="39" r="33" fill="#55585a"/><circle cx="39" cy="39" r="31" fill="none" stroke="#222" stroke-width="5" stroke-dasharray="2 1.500"/><circle cx="39" cy="39" r="22" fill="none" stroke="#aeb2b4" stroke-width="4"/><path d="M39 39h22M39 39L28 20M39 39L28 58" stroke="#aeb2b4" stroke-width="4"/><circle cx="39" cy="39" r="7" fill="#333" stroke="#aeb2b4" stroke-width="3"/></svg></div>
<span class="sep"></span>
<div class="ico run"><svg viewBox="0 0 78 78"><rect width="78" height="78" rx="18" fill="#f6f5f3"/><circle cx="39" cy="39" r="33" fill="#f5c042"/><path d="M39 22h28A33 33 0 0 0 11 22l14 25z" fill="#da4a3d"/><path d="M11 22a33 33 0 0 0 28 50l14-25-28 0z" fill="#55a55a"/><circle cx="39" cy="39" r="15" fill="#4080ee" stroke="#fff" stroke-width="4"/></svg></div>
<div class="ico run"><svg viewBox="0 0 78 78"><rect width="78" height="78" rx="18" fill="#f2f1ef"/><rect x="6" y="6" width="66" height="66" rx="12" fill="#8fb2ea"/><path d="M6 41h66v19q0 12-12 12H18Q6 72 6 60z" fill="#2c4a7c"/><path d="M6 58q15-6 30 4t36 2q-3 8-12 8H18Q6 72 6 60z" fill="#c9d0d6"/><rect x="41" y="38" width="32" height="17" rx="4" fill="#151515"/><path d="M43 55h28l7 20q0 6-6 6H41q-6 0-6-6z" fill="#c2c8ca" stroke="#e8eaeb" stroke-width="2"/><path d="M46 72l8-10 6 6 6-8 6 12z" fill="#777f84"/></svg></div>
<div class="ico run"><svg viewBox="0 0 78 78"><rect width="78" height="78" rx="18" fill="#fff"/><g stroke-width="11" stroke-linecap="round"><path d="M17 32h16M31 18v1" stroke="#5cc2ec"/><path d="M46 18v14M60 32v0" stroke="#51b37f"/><path d="M46 46h15M46 60v0" stroke="#e3b54c"/><path d="M31 46v14M17 46v0" stroke="#cc2b5b"/></g></svg></div>
<div class="ico run"><svg viewBox="0 0 78 78"><rect width="78" height="78" rx="18" fill="#fff"/><rect x="20" y="13" width="45" height="52" rx="4" fill="#3e9a63"/><path d="M42 13h23v13H42z" fill="#5fc389"/><path d="M20 39h22v26H20z" fill="#2f6f47"/><path d="M42 52h23v13H42z" fill="#2a5638"/><rect x="6" y="24" width="30" height="30" rx="3" fill="#256e3d"/><text x="21" y="46" text-anchor="middle" font-size="20" font-weight="600" fill="#fff">X</text></svg></div>
<div class="ico run"><svg viewBox="0 0 78 78"><rect width="78" height="78" rx="18" fill="#1d1f24"/><circle cx="39" cy="38" r="25" fill="#3c95f0" stroke="#c3cbdc" stroke-width="12"/><path d="M43 43l22 24" stroke="#c3cbdc" stroke-width="13"/></svg></div>
<span class="sep"></span>
<div class="ico trash"><svg viewBox="0 0 78 84"><path d="M6 8h66l-7 70q-2 8-26 8t-26-8z" fill="#74777a"/><path d="M20 14l6 64M58 14l-6 64M39 14v66" stroke="#808386" stroke-width="5"/><ellipse cx="39" cy="9" rx="34" ry="9" fill="#3d4042" stroke="#a9acae" stroke-width="2"/><path d="M12 8l8-10 8 6 4-10 8 5 10-5 6 10 8-1 4 8-10 6H22z" fill="#ddd"/><path d="M20 10l9-8 7 8M44 10l6-9 8 9" fill="none" stroke="#666" stroke-width="3"/></svg></div>
</div>
</footer>
<script src="script.js"></script>
</body>
</html>
```
FILE: styles.css
```css
/* Reset */
*{margin:0;padding:0;box-sizing:border-box;}
html,body{height:100%;}
body{display:flex;flex-direction:column;overflow:hidden;font-family:Roboto,Arial,sans-serif;font-size:26px;color:#333;
background:repeating-linear-gradient(-64deg,rgba(0,0,0,.3) 0 7px,transparent 13px 29px),repeating-linear-gradient(-17deg,#21130a 0,#33200f 22px,#4a451c 36px,#38220f 48px,#21130a 66px);}
a{color:inherit;text-decoration:none;}
button,select,input{font:inherit;color:inherit;border:none;background:none;}
button{cursor:pointer;}
svg{display:block;flex:none;overflow:visible;}
svg.defs{display:none;}

/* Mac menu bar */
.menubar{height:48px;flex:none;display:flex;justify-content:space-between;align-items:center;padding:0 38px 2px 41px;background:linear-gradient(90deg,#f0eee8,#e3e0d9);font-family:Inter,sans-serif;font-size:25px;color:#111;}
.menus,.status,.clock,.batt{display:flex;align-items:center;}
.menus{gap:43px;}
.menus .app{font-weight:700;}
.apple{width:26px;height:30px;margin-right:-2px;}
.status{gap:35px;color:#22211f;}
.batt{font-size:22px;gap:9px;margin-right:4px;}
.clock{gap:18px;}

/* Browser window */
.window{flex:1;min-height:0;display:flex;flex-direction:column;margin-top:1px;border-radius:20px;border-top:2px solid #6f7c8c;overflow:hidden;background:#28364b;}
.tabstrip{height:79px;flex:none;display:flex;align-items:flex-end;font-family:Inter,sans-serif;font-size:24px;color:#fff;}
.lights{width:180px;flex:none;display:flex;gap:16px;padding:0 42px;height:78px;align-items:center;}
.lights i{width:24px;height:24px;border-radius:50%;}
.lights .red{background:#ec6a5e;}
.lights .yellow{background:#f4bf4f;}
.lights .green{background:#61c554;}
.tabs{flex:1;min-width:0;display:grid;grid-template-columns:repeat(15,minmax(0,1fr));}
.tab{min-width:0;height:68px;display:flex;align-items:center;gap:16px;padding:0 20px 12px;position:relative;}
.tab svg{width:32px;height:32px;}
.tab span{flex:1;white-space:nowrap;-webkit-mask-image:linear-gradient(90deg,#000 55%,transparent);mask-image:linear-gradient(90deg,#000 55%,transparent);}
.tab::after{content:"";position:absolute;right:0;top:12px;width:3px;height:32px;background:#40567a;}
.tab.last::after{display:none;}
.tab.active{background:#415676;border-radius:20px 20px 0 0;margin:0 6px;padding:0 20px 12px 16px;}
.tab.active::before,.tab.active::after{content:"";position:absolute;top:auto;bottom:0;width:20px;height:20px;background:radial-gradient(circle at 0 0,transparent 19px,#415676 20px);right:100%;}
.tab.active::after{right:auto;left:100%;background:radial-gradient(circle at 100% 0,transparent 19px,#415676 20px);}
.tab.active span{-webkit-mask-image:none;mask-image:none;}
.tab .close svg{width:22px;height:22px;color:#fff;}
.newtab{width:68px;height:68px;flex:none;padding:0 22px 12px;}
.newtab svg{width:22px;height:22px;}
.tabmenu{width:56px;height:56px;flex:none;margin:0 12px 12px 102px;border-radius:18px;background:#415676;padding:18px;}
.tabmenu svg{width:20px;height:20px;}

.toolbar{height:94px;flex:none;display:flex;align-items:center;background:#415676;border-bottom:2px solid #6c7c96;border-radius:20px 20px 0 0;padding:0 40px 0 30px;}
.toolbar button{width:28px;margin-right:44px;}
.toolbar button:nth-child(3){margin-right:39px;}
.omnibox{flex:1;height:68px;display:flex;align-items:center;border-radius:34px;background:#37445a;padding:0 30px 0 9px;color:#fff;}
.site{width:48px;height:48px;border-radius:50%;background:#415676;padding:10px;}
.omnibox p{flex:1;margin-left:16px;font-family:Inter,sans-serif;font-size:28px;}
.omnibox em{font-style:normal;color:#b4bac4;}
.star{width:34px;height:34px;}
.panel{width:30px;height:30px;margin:0 38px;}
.profile{width:40px;height:40px;border-radius:50%;background:#4c2ea0;color:#fff;font-size:20px;line-height:40px;text-align:center;}
.kebab{width:8px;height:30px;margin-left:48px;}

/* App */
.page{flex:1;min-height:0;display:flex;background:#f5f7fb;}
.sidebar{width:460px;flex:none;display:flex;flex-direction:column;background:#131827;border-left:2px solid #3c4352;border-bottom:2px solid #3c4352;border-radius:0 0 0 20px;color:#9a9fb0;font-family:Inter,sans-serif;}
.logo{height:124px;flex:none;display:flex;align-items:center;gap:12px;padding:0 46px 2px;border-bottom:2px solid #333c4d;color:#fff;font-size:50px;font-weight:600;}
.logo svg{width:38px;height:38px;}
.menu{padding-top:34px;}
.menu a{height:76px;display:flex;align-items:center;padding:0 38px 0 50px;gap:32px;font-size:28px;}
.menu a svg{width:28px;height:28px;fill:none;stroke:currentColor;stroke-width:2.5;}
.menu a svg.disc{width:36px;height:36px;margin:0 -4px;}
.menu a.tight{gap:22px;}
.menu .on{color:#fff;font-weight:600;box-shadow:inset 6px 0 #3366ff;}
.new{border:2px solid #dd4fb4;color:#dd4fb4;border-radius:21px;font-size:21px;line-height:38px;padding:0 15px;margin-left:-7px;}
.caret{margin-left:auto;border:10px solid transparent;border-top-color:#c8c8c8;border-bottom-width:0;}
.credits{position:relative;overflow:hidden;margin:auto 14px 12px 13px;height:174px;display:flex;align-items:flex-start;padding:14px 15px 0 18px;border:2px solid #343e4f;border-radius:10px;background:#1f2736;color:#fff;font-size:26px;}
.credits::after{content:"";position:absolute;right:-64px;top:74px;width:190px;height:190px;border-radius:50%;background:#232f41;}
.credits svg{width:19px;height:24px;margin:10px 4px 0 0;}
.credits strong{flex:1;line-height:42px;}
.credits span{background:#3366f5;border-radius:23px;line-height:45px;padding:0 20px;}

main{flex:1;min-width:0;position:relative;overflow:hidden;display:flex;flex-direction:column;box-shadow:inset 3px 0 4px -2px rgba(0,0,0,.12);}
main::after{content:"";position:absolute;left:0;right:0;bottom:0;height:100px;background:linear-gradient(transparent,rgba(0,0,0,.11));pointer-events:none;}
.topbar{height:124px;flex:none;display:flex;align-items:center;background:#fff;border-bottom:2px solid #e5e7eb;padding-left:60px;}
.dash{display:flex;align-items:center;gap:22px;font-size:32px;color:#555;margin-right:70px;padding-bottom:2px;}
.dash svg{width:20px;height:20px;}
.search{width:532px;height:60px;display:flex;align-items:center;gap:18px;border:2px solid #e5e7eb;border-radius:30px;padding:0 10px 0 22px;color:#1c2434;}
.search svg{width:28px;height:28px;}
.search input{flex:1;min-width:0;outline:none;font-family:Inter,sans-serif;font-size:24px;}
.search input::placeholder{color:#99a1b3;opacity:1;}
.actions{margin-left:auto;display:flex;align-items:center;gap:38px;padding-right:19px;fill:#828a99;}
.dialer{height:60px;display:flex;align-items:center;gap:12px;padding:0 21px;margin-right:-6px;border-radius:6px;background:#4793e5;color:#fff;font-weight:700;box-shadow:0 8px 14px rgba(50,50,93,.14);}
.dialer svg{width:24px;height:24px;}
.bell{position:relative;}
.bell::after{content:"";position:absolute;right:-8px;top:-8px;width:18px;height:18px;border-radius:50%;background:#e93025;border:1px solid #fff;}
.me{width:122px;height:120px;align-self:flex-start;border-left:2px solid #e5e7eb;background:#f5f7fb;padding:30px 28px;fill:#828a99;}
.me svg{width:56px;height:56px;}

.pick{position:relative;}
.pick select{appearance:none;width:100%;height:100%;background:#fff;border:2px solid #aaa;border-radius:8px;padding:0 14px;color:#444;}
.pick::after{content:"";position:absolute;right:17px;top:50%;margin-top:-5px;border:6px solid transparent;border-top:11px solid #888;border-bottom:0;pointer-events:none;}
.status-pick{width:194px;height:60px;}
.status-pick select{border-color:#ccc;color:#3f9571;font-size:24px;}
.status-pick::after{border-width:9px 8px 0;border-top-color:#333;margin-top:-3px;right:14px;}
.w-s{width:260px;}
.w-m{width:302px;margin-left:16px;}

.filters{height:118px;flex:none;display:flex;align-items:flex-start;gap:24px;padding:24px 93px 0 100px;box-shadow:0 2px 5px rgba(0,0,0,.22);font-size:24px;}
.filters .pick{height:72px;}
.date{height:72px;margin-left:12px;background:#fff;border:2px solid #ccc;border-radius:10px;padding:0 10px;display:flex;align-items:center;gap:4px;}
.date i{border:8px solid transparent;border-top-color:#333;border-bottom:0;}
.btn{height:70px;padding:0 22px;border-radius:8px;background:#4793e5;color:#fff;font-size:26px;font-weight:500;margin-left:16px;box-shadow:0 8px 14px rgba(50,50,93,.14);}
.btn.outline{margin-left:auto;padding:0 20px;background:#fff;border:2px solid #4793e5;color:#5581f0;}

.cards{display:grid;grid-template-columns:1fr 1fr;gap:48px 42px;padding:44px 96px;}
.card{min-width:0;height:732px;position:relative;overflow:hidden;background:#fff;border:2px solid #e5e7eb;border-radius:18px;box-shadow:0 4px 8px rgba(0,0,0,.06);}
.wide{grid-column:1/3;}
.card h2{height:110px;padding-left:40px;font-size:30px;line-height:106px;font-weight:400;}
.card h2.ruled{height:95px;line-height:90px;border-bottom:4px solid #e5e8ed;}
.cardtabs{display:flex;gap:4px;height:90px;box-shadow:inset 0 -4px #f5f7fb;}
.cardtabs button{padding:0 40px;border-bottom:4px solid transparent;color:#444;}
.cardtabs .on{border-color:#5581f0;color:#555;}
.charts{display:grid;grid-template-columns:1fr 2fr;font-family:"Liberation Sans",Arial,sans-serif;font-size:24px;}
.pie{border-right:1px dashed #ddd;padding-top:39px;}
.pie svg{width:340px;margin:0 auto 31px;}
.pie ul{display:flex;justify-content:center;gap:34px;list-style:none;color:#666;line-height:28px;}
.pie li{display:flex;align-items:center;gap:14px;}
.pie li::before{content:"";width:76px;height:20px;background:#2d65c1;}
.pie .in::before{background:#5285c7;}
.line{position:relative;}
.line text{fill:#888;}
.tip{position:absolute;left:72%;top:36%;width:238px;height:152px;border:4px solid #ebebeb;border-radius:18px;background:rgba(255,255,255,.8);display:flex;flex-direction:column;align-items:center;padding-top:13px;line-height:37px;white-space:nowrap;}
.tip b{color:#666;line-height:42px;}
.tip .o{color:#2d65c1;}
.tip .i{color:#5285c7;}
.grip{position:absolute;right:14px;bottom:14px;width:32px;height:32px;}

.empty{padding-top:84px;text-align:center;color:#999;}
.empty svg{width:144px;margin:0 auto 35px;overflow:hidden;}
table{width:100%;border-collapse:collapse;table-layout:fixed;text-align:center;}
th{height:89px;padding-top:8px;color:#4a617f;font-weight:700;border-bottom:4px solid #ddd;}
td{height:123px;background:#f8f9fe;color:#111;line-height:37px;padding-left:28px;}
td.num{padding-left:14px;}
td.in{padding-left:6px;}
.c1,.c2{width:31.6%;}
.c3{width:19.4%;}
.c4{width:13.8%;}
.member{display:flex;align-items:center;padding:0 18px;}
.member span:last-child{flex:1;}
.avatar{position:relative;width:64px;height:64px;border-radius:50%;border:2px solid #e0cdea;background:#e9d8f3;color:#a79bb0;font-size:20px;line-height:60px;}
.avatar::before{content:"";position:absolute;left:-3px;top:10px;width:14px;height:14px;border-radius:50%;background:#65b05a;}
.totop{position:absolute;left:20px;bottom:20px;width:89px;height:94px;border-radius:8px;background:rgba(132,148,176,.78);display:flex;align-items:center;justify-content:center;}
.totop svg{width:36px;height:24px;}
.chat{position:absolute;right:40px;bottom:40px;width:96px;height:96px;border-radius:50%;background:#1a409f;display:flex;align-items:center;justify-content:center;box-shadow:0 2px 40px rgba(0,0,0,.2);}
.chat svg{width:42px;height:48px;}

/* Dock */
.dockarea{flex:none;padding:4px 87px 10px;background:linear-gradient(#050402,transparent 12px);}
.dock{height:126px;display:flex;align-items:flex-start;justify-content:space-between;padding:17px 18px 0 16px;border:2px solid #5b4f3c;border-radius:36px;background:linear-gradient(90deg,#33281a,#432c14 45%,#2b2215);font-family:Inter,sans-serif;}
.ico{width:78px;position:relative;}
.ico svg{width:78px;height:78px;}
.ico.run::after{content:"";position:absolute;left:35px;top:95px;width:8px;height:8px;border-radius:50%;background:#b5a58d;}
.ico b{position:absolute;left:53px;top:-9px;min-width:36px;height:36px;padding:0 5px;border-radius:18px;background:#e0503f;color:#fff;font-size:20px;font-weight:400;line-height:36px;text-align:center;}
.ico b.long{left:34px;padding:0 4px;}
.sep{width:2px;height:94px;margin:-3px 9px 0;background:#63584a;}
.trash svg{width:72px;height:84px;margin:-2px auto 0;}
```
FILE: script.js
```javascript
/* ----- Data ----- */
const days=['2023-12-16','2023-12-17','2023-12-18','2023-12-19','2023-12-20','2023-12-21','2023-12-22'];
const outbound=[0,0,53,42,71,12,0];
const inbound=[0,0,0,0,2,1,0];
const active=5;
const left=105,step=216,base=420,unit=4.4;

/* ----- Line chart ----- */
function pts(data){return data.map((v,i)=>({x:left+i*step,y:base-v*unit}));}
function curve(p){
 // slope at each point, from its neighbours
 const g=p.map((c,i)=>{
  const a=p[i-1]||c,b=p[i+1]||c;
  return (b.y-a.y)/(b.x-a.x);
 });
 const q=step/4;
 let d=`M${p[0].x} ${p[0].y}`;
 for(let i=1;i<p.length;i++){
  const a=p[i-1],b=p[i];
  d+=`C${a.x+q} ${Math.min(base,a.y+q*g[i-1])} ${b.x-q} ${Math.min(base,b.y-q*g[i])} ${b.x} ${b.y}`;
 }
 return d;
}
function series(data,color){
 const p=pts(data);
 let s=`<path d="${curve(p)}" fill="none" stroke="${color}" stroke-width="6"/>`;
 p.forEach((c,i)=>{s+=`<circle cx="${c.x}" cy="${c.y}" r="${i===active?14:8}" fill="${color}" stroke="#fff" stroke-width="2"/>`;});
 return s;
}
let out='';
for(let v=0;v<=80;v+=20){
 const y=base-v*unit;
 out+=`<path d="M${left} ${y}H${left+6*step}" stroke="#d0d0d0" stroke-width="2"/><text x="80" y="${y+9}" text-anchor="end">${v}</text>`;
}
days.slice(0,6).forEach((d,i)=>{out+=`<text x="${left+i*step}" y="468" text-anchor="middle">${d}</text>`;});
document.getElementById('line').innerHTML=out+series(inbound,'#5285c7')+series(outbound,'#2d65c1');

/* ----- Donut ----- */
const r=145.5,len=2*Math.PI*r,share=0.0165;
const total=`<circle cx="170" cy="170" r="${r}" fill="none" stroke="#2d65c1" stroke-width="47"/>`;
const slice=`<circle cx="170" cy="170" r="${r}" fill="none" stroke="#5285c7" stroke-width="47" stroke-dasharray="${len*share} ${len}" transform="rotate(${-90-360*share} 170 170)"/>`;
const gaps=`<path d="M170 50V-2" stroke="#fff" stroke-width="4"/><path d="M170 50V-2" stroke="#fff" stroke-width="4" transform="rotate(${-360*share} 170 170)"/>`;
document.getElementById('donut').innerHTML=total+slice+gaps;
```
